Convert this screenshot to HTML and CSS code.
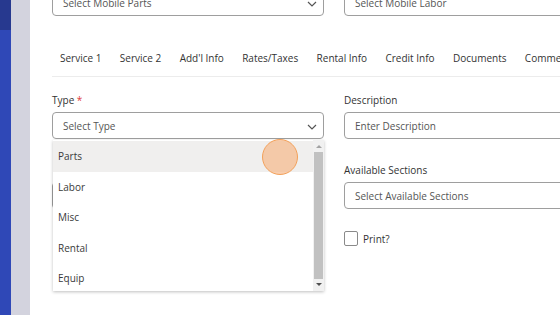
FILE: index.html
```html
<!DOCTYPE html>
<html>
<head>
<meta charset="utf-8">
<link rel="stylesheet" href="styles.css">
</head>
<body>
<div class="app">
  <div class="rail"><div class="rail-top"></div></div>
  <div class="strip"></div>
  <main class="main">
    <div class="grid top-row">
      <div class="input select">Select Mobile Parts<svg class="chev" viewBox="0 0 10 6"><polyline points="1,1 5,5 9,1"/></svg></div>
      <div class="input">Select Mobile Labor</div>
    </div>
    <nav class="tabs">
      <span class="tab">Service 1</span>
      <span class="tab">Service 2</span>
      <span class="tab">Add'l Info</span>
      <span class="tab">Rates/Taxes</span>
      <span class="tab">Rental Info</span>
      <span class="tab">Credit Info</span>
      <span class="tab">Documents</span>
      <span class="tab">Comments</span>
    </nav>
    <div class="grid form">
      <div class="field type-field">
        <label class="label">Type <span class="req">*</span></label>
        <div class="input select">Select Type<svg class="chev" viewBox="0 0 10 6"><polyline points="1,1 5,5 9,1"/></svg></div>
        <div class="dropdown">
          <div class="options">
            <div class="option active">Parts</div>
            <div class="option">Labor</div>
            <div class="option">Misc</div>
            <div class="option">Rental</div>
            <div class="option">Equip</div>
          </div>
          <div class="scrollbar">
            <span class="arrow up"></span>
            <span class="thumb"></span>
            <span class="arrow down"></span>
          </div>
          <span class="cursor"></span>
        </div>
      </div>
      <div class="field">
        <label class="label">Description</label>
        <div class="input">Enter Description</div>
      </div>
      <div class="field">
        <span class="label"></span>
        <div class="input"></div>
      </div>
      <div class="field">
        <label class="label">Available Sections</label>
        <div class="input">Select Available Sections</div>
      </div>
      <div class="field"></div>
      <div class="field check-field">
        <span class="checkbox"></span><span class="check-label">Print?</span>
      </div>
    </div>
  </main>
</div>
</body>
</html>
```

FILE: styles.css
```css
* { box-sizing: border-box; }
html, body { margin: 0; padding: 0; }
body {
  width: 560px;
  height: 315px;
  overflow: hidden;
  font-family: "Open Sans", "DejaVu Sans", sans-serif;
  font-size: 10px;
  color: #3a3a3a;
  background: #fff;
}
.app { display: flex; height: 315px; }
.rail { width: 11px; background: #2f48b7; flex: none; }
.rail-top { height: 30px; background: #27398f; }
.strip { width: 19px; background: #d3d3de; flex: none; }
.main {
  flex: 1;
  padding-left: 22px;
  overflow: hidden;
  position: relative;
}
.grid {
  display: grid;
  grid-template-columns: 272px 272px;
  column-gap: 20px;
}
.top-row { margin-top: -11px; }
.input {
  height: 27px;
  border: 1px solid #9e9e9e;
  border-radius: 4px;
  display: flex;
  align-items: center;
  padding-left: 10px;
  color: #555;
  position: relative;
  background: #fff;
}
.chev {
  position: absolute;
  right: 6px;
  top: 11px;
  width: 10px;
  height: 6px;
  fill: none;
  stroke: #555;
  stroke-width: 1.2;
}
.tabs {
  display: flex;
  margin-top: 24px;
  height: 37px;
  align-items: center;
  border-bottom: 1px solid #ececec;
  white-space: nowrap;
  color: #333;
}
.tab { padding: 0 9.2px; }
.tab:first-child { padding-left: 8px; }
.form { margin-top: 16px; row-gap: 24px; }
.field { display: flex; flex-direction: column; position: relative; }
.label { height: 15px; line-height: 15px; margin-bottom: 4px; color: #333; }
.req { color: #e03a3a; }
.check-field { flex-direction: row; align-items: center; margin-top: -2px; height: 15px; }
.checkbox {
  width: 14px; height: 15px;
  border: 1px solid #8a8a8a;
  border-radius: 2px;
  margin-right: 5px;
}
.check-label { color: #333; }
.dropdown {
  position: absolute;
  top: 47px;
  left: 1px;
  width: 271px;
  height: 151px;
  background: #fff;
  box-shadow: 0 1px 3px rgba(0,0,0,0.25);
  display: flex;
  z-index: 5;
}
.options { flex: 1; padding-top: 1px; }
.option {
  height: 30.6px;
  line-height: 30.6px;
  padding-left: 5px;
  color: #3a3a3a;
}
.option.active { background: #f0efee; }
.scrollbar {
  width: 11px;
  background: #f1f1f1;
  display: flex;
  flex-direction: column;
  align-items: center;
  padding: 5px 0;
}
.thumb { width: 9px; flex: 1; background: #c1c1c1; margin: 4px 0; }
.arrow { width: 0; height: 0; border-left: 3px solid transparent; border-right: 3px solid transparent; }
.arrow.up { border-bottom: 3px solid #a3a3a3; }
.arrow.down { border-top: 3px solid #505050; }
.cursor {
  position: absolute;
  left: 209px;
  top: -1px;
  width: 36px;
  height: 36px;
  border-radius: 50%;
  background: rgba(246, 180, 130, 0.65);
  border: 1.5px solid #f3a15a;
}
```
